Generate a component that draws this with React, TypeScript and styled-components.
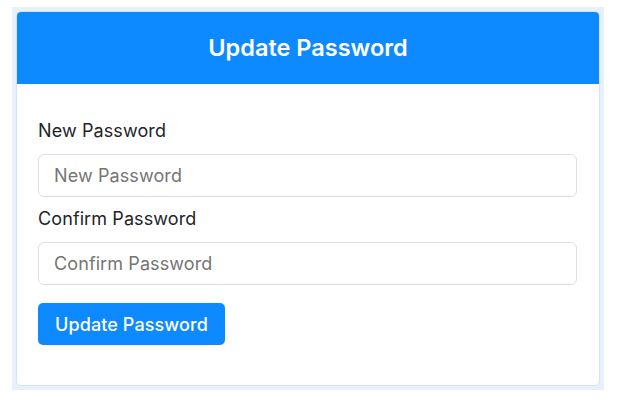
import React from "react";
import styled, { createGlobalStyle } from "styled-components";

const COLORS = {
  primary: "#0d8aff",
  text: "#212529",
  muted: "#6c757d",
  border: "#dcdfe3",
  cardBorder: "#d7e3ef",
  backdrop: "#e8f1fb",
};

const GlobalStyle = createGlobalStyle`
  html, body {
    margin: 0;
    padding: 0;
    background: #ffffff;
  }

  body {
    font-family: "Inter", "Noto Sans", sans-serif;
    color: ${COLORS.text};
  }

  * {
    box-sizing: border-box;
  }
`;

const App: React.FC = () => {
  return (
    <>
      <GlobalStyle />
      <Backdrop>
        <Card>
          <CardHeader>Update Password</CardHeader>
          <CardBody>
            <FormGroup>
              <Label htmlFor="new-password">New Password</Label>
              <Input id="new-password" type="password" placeholder="New Password" />
            </FormGroup>
            <FormGroup>
              <Label htmlFor="confirm-password">Confirm Password</Label>
              <Input
                id="confirm-password"
                type="password"
                placeholder="Confirm Password"
              />
            </FormGroup>
            <SubmitButton type="button">Update Password</SubmitButton>
          </CardBody>
        </Card>
      </Backdrop>
    </>
  );
};

const Backdrop = styled.div`
  width: 592px;
  margin: 7px 0 0 12px;
  padding: 4px;
  background: ${COLORS.backdrop};
`;

const Card = styled.div`
  display: flex;
  flex-direction: column;

  background: #ffffff;
  border: 1px solid ${COLORS.cardBorder};
  border-radius: 5px;
  overflow: hidden;
`;

const CardHeader = styled.div`
  display: flex;
  align-items: center;
  justify-content: center;

  height: 73px;
  margin: -1px -1px 0;
  background: ${COLORS.primary};

  font-size: 23.5px;
  font-weight: 600;
  color: #ffffff;
`;

const CardBody = styled.div`
  display: flex;
  flex-direction: column;
  align-items: flex-start;

  padding: 35px 22px 40px 21px;
`;

const FormGroup = styled.div`
  display: flex;
  flex-direction: column;
  gap: 11px;

  width: 100%;
  margin-bottom: 10px;
`;

const Label = styled.label`
  font-size: 18px;
  line-height: 24px;
  font-weight: 400;
  letter-spacing: 0.1px;
  color: ${COLORS.text};
`;

const Input = styled.input`
  width: 100%;
  height: 43px;
  padding: 0 15px;

  border: 1px solid ${COLORS.border};
  border-radius: 6px;
  outline: none;

  font-family: inherit;
  font-size: 18px;
  letter-spacing: 0.1px;
  color: ${COLORS.text};

  ::placeholder {
    color: ${COLORS.muted};
  }
`;

const SubmitButton = styled.button`
  height: 42px;
  margin-top: 8px;
  padding: 0 17px;

  background: ${COLORS.primary};
  border: none;
  border-radius: 5px;

  font-family: inherit;
  font-size: 18px;
  font-weight: 500;
  letter-spacing: 0.1px;
  color: #ffffff;
`;

export default App;
